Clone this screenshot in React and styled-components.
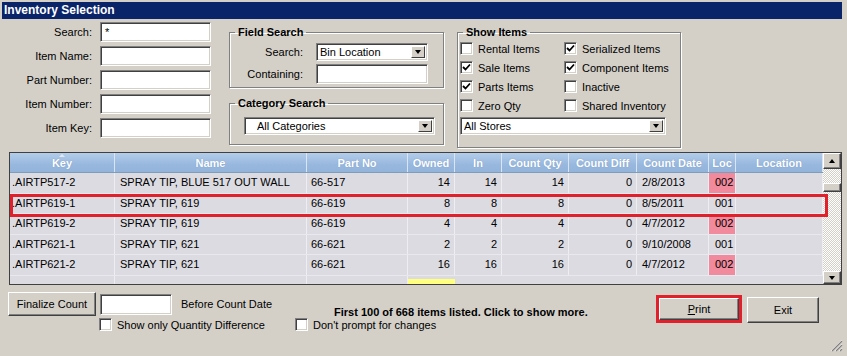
import React from 'react'
import styled, { createGlobalStyle } from 'styled-components'

const Global = createGlobalStyle`
  body { margin: 0; background: #d4d0c8; }
  * { box-sizing: border-box; }
`

const Window = styled.div`
  position: relative;
  width: 847px;
  height: 356px;
  overflow: hidden;
  background: #d4d0c8;
  font-family: "Liberation Sans", Arial, sans-serif;
  font-size: 11px;
  color: #000;`

const TitleBar = styled.div`
  margin: 2px 5px 0 2px;
  height: 17px;
  background: #0a246a;
  color: #fff;
  font-weight: bold;
  font-size: 12px;
  line-height: 17px;
  padding-left: 2px;`

const TopArea = styled.div`
  display: flex;
  height: 133px;`

const FormGrid = styled.div`
  display: grid;
  grid-template-columns: 92px 111px;
  grid-auto-rows: 20px;
  column-gap: 8px;
  row-gap: 4px;
  padding-top: 3px;
  align-content: start;`

const Label = styled.label`
  text-align: right;
  align-self: center;
  white-space: nowrap;`

const TextBox = styled.div`
  width: ${p => p.w || 111}px;
  height: ${p => p.h || 20}px;
  background: #fff;
  border: 1px solid;
  border-color: #808080 #fff #fff #808080;
  box-shadow: inset 1px 1px #404040, inset -1px -1px #d4d0c8;
  padding: 3px 4px;
  line-height: 12px;`

const Column = styled.div`
  display: flex;
  flex-direction: column;
  margin-left: ${p => p.ml}px;
  width: ${p => p.w}px;
  padding-top: 7px;`

const Group = styled.fieldset`
  margin: ${p => p.mt || 0}px 0 0 0;
  padding: ${p => p.pad || '0'};
  min-width: 0;
  height: ${p => p.h}px;
  border: 1px solid #808080;
  box-shadow: inset 1px 1px #fff, 1px 1px #fff;`

const Legend = styled.legend`
  font-weight: bold;
  padding: 0 3px;
  margin-left: 5px;
  line-height: 13px;`

const FieldRow = styled.div`
  display: flex;
  align-items: center;
  margin-bottom: 3px;`

const FieldLabel = styled.span`
  width: 73px;
  text-align: right;
  margin-right: 13px;`

const SelectBox = styled.div`
  display: flex;
  align-items: center;
  width: ${p => p.w}px;
  height: 18px;
  margin-left: ${p => p.ml || 0}px;
  margin-top: ${p => p.mt || 0}px;
  background: #fff;
  border: 1px solid;
  border-color: #808080 #fff #fff #808080;
  box-shadow: inset 1px 1px #404040, inset -1px -1px #d4d0c8;
  padding: 2px 2px 2px ${p => p.pl || 3}px;`

const SelectText = styled.span`
  flex: 1;
  white-space: nowrap;
  overflow: hidden;`

const DropButton = styled.span`
  display: flex;
  align-items: center;
  justify-content: center;
  width: 14px;
  height: 12px;
  background: #d4d0c8;
  border: 1px solid;
  border-color: #fff #404040 #404040 #fff;
  &::after {
    content: '';
    border-left: 3.5px solid transparent;
    border-right: 3.5px solid transparent;
    border-top: 4px solid #000;
  }`

const CheckGrid = styled.div`
  display: grid;
  grid-template-columns: 104px 1fr;
  grid-auto-rows: 19px;
  padding-left: 2px;`

const CheckRow = styled.div`
  display: flex;
  align-items: center;
  gap: 5px;
  white-space: nowrap;
  margin-left: ${p => p.ml || 0}px;`

const Box = styled.span`
  display: inline-flex;
  align-items: center;
  justify-content: center;
  width: 13px;
  height: 13px;
  flex: none;
  background: #fff;
  border: 1px solid;
  border-color: #808080 #fff #fff #808080;
  box-shadow: inset 1px 1px #404040, inset -1px -1px #d4d0c8;`

const Check = ({ on, label, ml }) => (
  <CheckRow ml={ml}>
    <Box>
      {on && (
        <svg width="9" height="9" viewBox="0 0 9 9">
          <path d="M1 4 L3.5 6.5 L8 1.5" fill="none" stroke="#000" strokeWidth="1.8" />
        </svg>
      )}
    </Box>
    <span>{label}</span>
  </CheckRow>
)

const GridFrame = styled.div`
  position: relative;
  margin-left: 9px;
  width: 833px;
  height: 133px;
  border: 1px solid #404040;
  display: flex;
  background: #dcdbe2;`

const TableArea = styled.div`
  width: 813px;
  overflow: hidden;`

const cols = '105px 192px 101px 47px 47px 67px 68px 72px 27px 87px'

const HeadRow = styled.div`
  display: grid;
  grid-template-columns: ${cols};
  height: 20px;
  background: linear-gradient(#b3cdea, #99b8de 60%, #92b3db);
  border-bottom: 1px solid #7f9db9;`

const HeadCell = styled.div`
  position: relative;
  color: #fff;
  font-weight: bold;
  text-align: center;
  line-height: 20px;
  border-right: 1px solid #d9e5f3;
  text-shadow: 0 0 1px #6f8fb8;
  white-space: nowrap;
  overflow: hidden;`

const SortMark = styled.span`
  position: absolute;
  left: 50%;
  top: 1px;
  margin-left: -3px;
  border-left: 3px solid transparent;
  border-right: 3px solid transparent;
  border-bottom: 3px solid #dfe9f5;`

const Row = styled.div`
  display: grid;
  grid-template-columns: ${cols};
  height: 20.5px;
  border-bottom: 1px solid #e9e8ee;`

const Cell = styled.div`
  text-align: ${p => p.align || 'left'};
  padding: 0 ${p => p.pr || 4}px 0 ${p => p.pl || 4}px;
  line-height: 19px;
  border-right: 1px solid #eeedf2;
  white-space: nowrap;
  overflow: hidden;
  background: ${p => p.bg || 'transparent'};`

const YellowCell = styled.div`
  margin-top: 3px;
  background: #ffff80;`

const ScrollBar = styled.div`
  width: 18px;
  display: flex;
  flex-direction: column;
  background-color: #f0eee8;
  background-image: repeating-conic-gradient(#d4d0c8 0 25%, #fff 0 50%);
  background-size: 2px 2px;`

const ScrollButton = styled.div`
  height: ${p => p.h || 16}px;
  margin-top: ${p => p.mt || 0}px;
  display: flex;
  align-items: center;
  justify-content: center;
  background: #d4d0c8;
  border: 1px solid;
  border-color: #fff #404040 #404040 #fff;
  box-shadow: inset -1px -1px #808080;
  &::after {
    content: '';
    display: ${p => (p.dir ? 'block' : 'none')};
    border-left: 3.5px solid transparent;
    border-right: 3.5px solid transparent;
    ${p => (p.dir === 'up' ? 'border-bottom: 4px solid #000;' : 'border-top: 4px solid #000;')}
  }`

const Spacer = styled.div`
  flex: 1;`

const Highlight = styled.div`
  position: absolute;
  left: 0;
  top: 41px;
  width: 818px;
  height: 23px;
  border: 3px solid #e0202a;
  pointer-events: none;`

const BottomBar = styled.div`
  display: flex;
  padding-top: 7px;`

const LeftBlock = styled.div`
  width: 295px;
  padding-left: 8px;`

const InlineRow = styled.div`
  display: flex;
  align-items: center;
  margin-top: ${p => p.mt || 0}px;`

const Hint = styled.span`
  margin-left: 9px;`

const Button = styled.div`
  width: ${p => p.w}px;
  height: ${p => p.h}px;
  display: flex;
  align-items: center;
  justify-content: center;
  background: #d4d0c8;
  border: 1px solid;
  border-color: #fff #404040 #404040 #fff;
  box-shadow: inset -1px -1px #808080;
  margin-right: ${p => p.mr || 0}px;
  margin-top: ${p => p.mt || 0}px;`

const MidBlock = styled.div`
  flex: 1;
  padding-top: 14px;`

const Status = styled.div`
  font-weight: bold;
  margin-left: 39px;
  height: 12px;
  line-height: 12px;`

const Buttons = styled.div`
  display: flex;
  align-items: flex-start;
  gap: 5px;
  padding-top: 3px;
  margin-right: 28px;`

const RedFrame = styled.div`
  border: 3px solid #e0202a;`

const Grip = styled.svg`
  position: absolute;
  right: 4px;
  bottom: 4px;`

const rows = [
  ['.AIRTP517-2', 'SPRAY TIP, BLUE 517 OUT WALL', '66-517', 14, 14, 14, 0, '2/8/2013', '002'],
  ['.AIRTP619-1', 'SPRAY TIP, 619', '66-619', 8, 8, 8, 0, '8/5/2011', '001'],
  ['.AIRTP619-2', 'SPRAY TIP, 619', '66-619', 4, 4, 4, 0, '4/7/2012', '002'],
  ['.AIRTP621-1', 'SPRAY TIP, 621', '66-621', 2, 2, 2, 0, '9/10/2008', '001'],
  ['.AIRTP621-2', 'SPRAY TIP, 621', '66-621', 16, 16, 16, 0, '4/7/2012', '002'],
]

const heads = ['Key', 'Name', 'Part No', 'Owned', 'In', 'Count Qty', 'Count Diff', 'Count Date', 'Loc', 'Location']

export default function App() {
  return (
    <Window>
      <Global />
      <TitleBar>Inventory Selection</TitleBar>
      <TopArea>
        <FormGrid>
          <Label>Search:</Label>
          <TextBox>*</TextBox>
          <Label>Item Name:</Label>
          <TextBox />
          <Label>Part Number:</Label>
          <TextBox />
          <Label>Item Number:</Label>
          <TextBox />
          <Label>Item Key:</Label>
          <TextBox />
        </FormGrid>

        <Column ml={18} w={215}>
          <Group h={62} pad="4px 0 0 0">
            <Legend>Field Search</Legend>
            <FieldRow>
              <FieldLabel>Search:</FieldLabel>
              <SelectBox w={112}>
                <SelectText>Bin Location</SelectText>
                <DropButton />
              </SelectBox>
            </FieldRow>
            <FieldRow>
              <FieldLabel>Containing:</FieldLabel>
              <TextBox w={112} />
            </FieldRow>
          </Group>
          <Group h={48} mt={9} pad="7px 0 0 0">
            <Legend>Category Search</Legend>
            <SelectBox w={191} ml={14} pl={12}>
              <SelectText>All Categories</SelectText>
              <DropButton />
            </SelectBox>
          </Group>
        </Column>

        <Column ml={13} w={224}>
          <Group h={122}>
            <Legend>Show Items</Legend>
            <CheckGrid>
              <Check label="Rental Items" />
              <Check on label="Serialized Items" />
              <Check on label="Sale Items" />
              <Check on label="Component Items" />
              <Check on label="Parts Items" />
              <Check label="Inactive" />
              <Check label="Zero Qty" />
              <Check label="Shared Inventory" />
            </CheckGrid>
            <SelectBox w={206} ml={2} mt={2}>
              <SelectText>All Stores</SelectText>
              <DropButton />
            </SelectBox>
          </Group>
        </Column>
      </TopArea>

      <GridFrame>
        <TableArea>
          <HeadRow>
            {heads.map((h, i) => (
              <HeadCell key={h}>
                {i === 0 && <SortMark />}
                {h}
              </HeadCell>
            ))}
          </HeadRow>
          {rows.map(r => (
            <Row key={r[0]}>
              <Cell pl={2}>{r[0]}</Cell>
              <Cell pl={5}>{r[1]}</Cell>
              <Cell>{r[2]}</Cell>
              <Cell align="right">{r[3]}</Cell>
              <Cell align="right">{r[4]}</Cell>
              <Cell align="right">{r[5]}</Cell>
              <Cell align="right">{r[6]}</Cell>
              <Cell pl={5}>{r[7]}</Cell>
              <Cell pl={6} bg={r[8] === '002' ? '#f08a9c' : undefined}>{r[8]}</Cell>
              <Cell />
            </Row>
          ))}
          <Row>
            <Cell />
            <Cell />
            <Cell />
            <YellowCell />
          </Row>
        </TableArea>
        <ScrollBar>
          <ScrollButton dir="up" />
          <ScrollButton h={9} mt={14} />
          <Spacer />
          <ScrollButton dir="down" h={13} />
        </ScrollBar>
        <Highlight />
      </GridFrame>

      <BottomBar>
        <LeftBlock>
          <InlineRow>
            <Button w={88} h={24} mr={4}>Finalize Count</Button>
            <TextBox w={72} h={21} />
            <Hint>Before Count Date</Hint>
          </InlineRow>
          <InlineRow mt={2}>
            <Check ml={91} label="Show only Quantity Difference" />
          </InlineRow>
        </LeftBlock>
        <MidBlock>
          <Status>First 100 of 668 items listed. Click to show more.</Status>
          <Check label="Don't prompt for changes" />
        </MidBlock>
        <Buttons>
          <RedFrame>
            <Button w={80} h={22}><span><u>P</u>rint</span></Button>
          </RedFrame>
          <Button w={72} h={26} mt={2}>Exit</Button>
        </Buttons>
      </BottomBar>

      <Grip width="13" height="13" viewBox="0 0 13 13">
        <path d="M12 1 L1 12 M12 5 L5 12 M12 9 L9 12" stroke="#fff" strokeWidth="1" />
        <path d="M12 2 L2 12 M12 6 L6 12 M12 10 L10 12" stroke="#808080" strokeWidth="1.2" />
      </Grip>
    </Window>
  )
}
